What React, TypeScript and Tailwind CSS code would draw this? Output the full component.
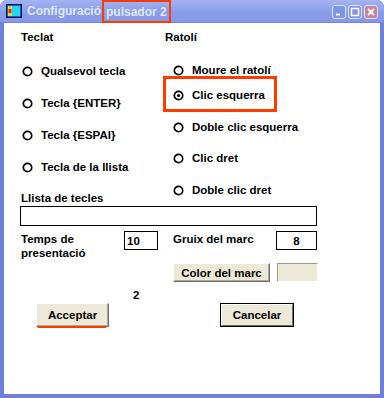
import React from 'react';

const font = { fontFamily: '"Liberation Sans", Arial, sans-serif' };

function Radio({ checked }: { checked?: boolean }) {
  return (
    <svg width="11" height="11" viewBox="0 0 11 11" className="shrink-0">
      <circle cx="5.5" cy="5.5" r="4.2" fill="white" stroke="black" strokeWidth="1.7" />
      {checked && <circle cx="5.5" cy="5.5" r="1.6" fill="black" />}
    </svg>
  );
}

function Option({ label, checked, className = '' }: { label: string; checked?: boolean; className?: string }) {
  return (
    <div className={`relative flex items-center gap-[8px] h-[20px] ${className}`}>
      <Radio checked={checked} />
      <span className="whitespace-nowrap">{label}</span>
    </div>
  );
}

function TitleIcon() {
  return (
    <svg width="16" height="14" viewBox="0 0 16 14" className="shrink-0">
      <rect x="0" y="0" width="16" height="14" fill="#000060" />
      <rect x="1.5" y="1.5" width="13" height="11" fill="#22d8f0" />
      <rect x="2" y="2" width="1.5" height="10" fill="#ffe600" />
      <rect x="4.5" y="2" width="1.5" height="10" fill="#ffe600" />
      <rect x="2.5" y="5" width="3" height="4" fill="#e8202a" />
    </svg>
  );
}

function CapButton({ kind }: { kind: 'min' | 'max' | 'close' }) {
  const bg = kind === 'close' ? 'bg-[#c7849a]' : 'bg-[#7e95e8]';
  return (
    <div className={`w-[14px] h-[14px] rounded-[3px] border border-[#dbe3fb] ${bg} flex items-center justify-center`}>
      <svg width="10" height="10" viewBox="0 0 10 10">
        {kind === 'min' && <rect x="2" y="6.5" width="4" height="2" fill="white" />}
        {kind === 'max' && <rect x="1.5" y="1.5" width="7" height="7" fill="none" stroke="white" strokeWidth="1.5" />}
        {kind === 'close' && (
          <path d="M2 2 L8 8 M8 2 L2 8" stroke="white" strokeWidth="1.8" />
        )}
      </svg>
    </div>
  );
}

export default function App() {
  return (
    <div className="w-[384px] h-[398px] bg-white text-black text-[11.5px] font-bold leading-[14px]" style={font}>
      <div className="w-full h-full flex flex-col rounded-t-[7px] overflow-hidden bg-[#6f7fdc]">
        {/* title bar */}
        <div className="h-[23px] shrink-0 flex items-center pl-[6px] pr-[6px] bg-gradient-to-b from-[#a3b3f2] via-[#8c9fea] to-[#8597e6] border-b border-[#7485dc]">
          <TitleIcon />
          <div className="ml-[5px] text-[12px] text-[#dfe7fb] whitespace-nowrap flex items-center">
            <span>Configuració</span>
            <span className="ml-[1px] px-[2px] h-[23px] mt-[1px] flex items-center border-[2px] border-[#ff3a00]">pulsador 2</span>
          </div>
          <div className="ml-auto flex gap-[2px] pt-[1px]">
            <CapButton kind="min" />
            <CapButton kind="max" />
            <CapButton kind="close" />
          </div>
        </div>

        {/* body */}
        <div className="flex-1 mx-[4px] mb-[4px] bg-white pl-[17px] pt-[7px] flex flex-col">
          <div className="grid grid-cols-[144px_1fr]">
            <div className="flex flex-col">
              <div className="h-[14px]">Teclat</div>
              <Option className="mt-[17px] pl-[1px]" label="Qualsevol tecla" />
              <Option className="mt-[12px] pl-[1px]" label="Tecla {ENTER}" />
              <Option className="mt-[12px] pl-[1px]" label="Tecla {ESPAI}" />
              <Option className="mt-[12px] pl-[1px]" label="Tecla de la llista" />
              <div className="mt-[14px] h-[14px]">Llista de tecles</div>
            </div>
            <div className="flex flex-col">
              <div className="h-[14px]">Ratolí</div>
              <Option className="mt-[16px] pl-[8px]" label="Moure el ratolí" />
              <div className="relative mt-[5px]">
                <Option className="pl-[8px]" label="Clic esquerra" checked />
                <div className="absolute left-[-2px] top-[-9px] w-[114px] h-[36px] border-[3px] border-[#ff3a00]" />
              </div>
              <Option className="mt-[12px] pl-[8px]" label="Doble clic esquerra" />
              <Option className="mt-[11px] pl-[8px]" label="Clic dret" />
              <Option className="mt-[12px] pl-[8px]" label="Doble clic dret" />
            </div>
          </div>

          <div className="mt-[1px] -ml-[1px] w-[297px] h-[20px] border border-black bg-white" />

          <div className="mt-[5px] flex items-start">
            <div className="w-[103px] pt-[1px] leading-[14px]">
              Temps de
              <br />
              presentació
            </div>
            <div className="w-[34px] h-[19px] border border-black flex items-center pl-[2px]">10</div>
            <div className="ml-[15px] w-[103px] pt-[1px]">Gruix del marc</div>
            <div className="w-[41px] h-[19px] border border-black flex items-center justify-center">8</div>
          </div>

          <div className="mt-[3px] ml-[152px] flex items-center gap-[7px]">
            <div className="w-[97px] h-[19px] bg-[#ece9d8] border border-t-white border-l-white border-r-[#716f64] border-b-[#716f64] shadow-[inset_-1px_-1px_0_#aca899] flex items-center justify-center">
              Color del marc
            </div>
            <div className="w-[41px] h-[19px] bg-[#ece9d8] border border-t-[#9c9a8f] border-l-[#9c9a8f] border-r-white border-b-white" />
          </div>

          <div className="mt-[7px] ml-[112px] h-[12px] leading-[12px]">2</div>

          <div className="mt-[2px] flex items-start">
            <div className="ml-[15px] relative w-[73px] h-[24px] bg-[#ece9d8] border border-t-white border-l-white border-r-[#716f64] border-b-[#716f64] shadow-[inset_-1px_-1px_0_#aca899] flex items-center justify-center">
              Acceptar
              <div className="absolute left-[1px] right-[2px] bottom-[-2px] h-[2px] bg-[#ff3a00]" />
            </div>
            <div className="ml-[111px] w-[74px] h-[24px] border border-black">
              <div className="w-full h-full bg-[#ece9d8] border border-t-white border-l-white border-r-[#716f64] border-b-[#716f64] flex items-center justify-center">
                Cancelar
              </div>
            </div>
          </div>
        </div>
      </div>
    </div>
  );
}
